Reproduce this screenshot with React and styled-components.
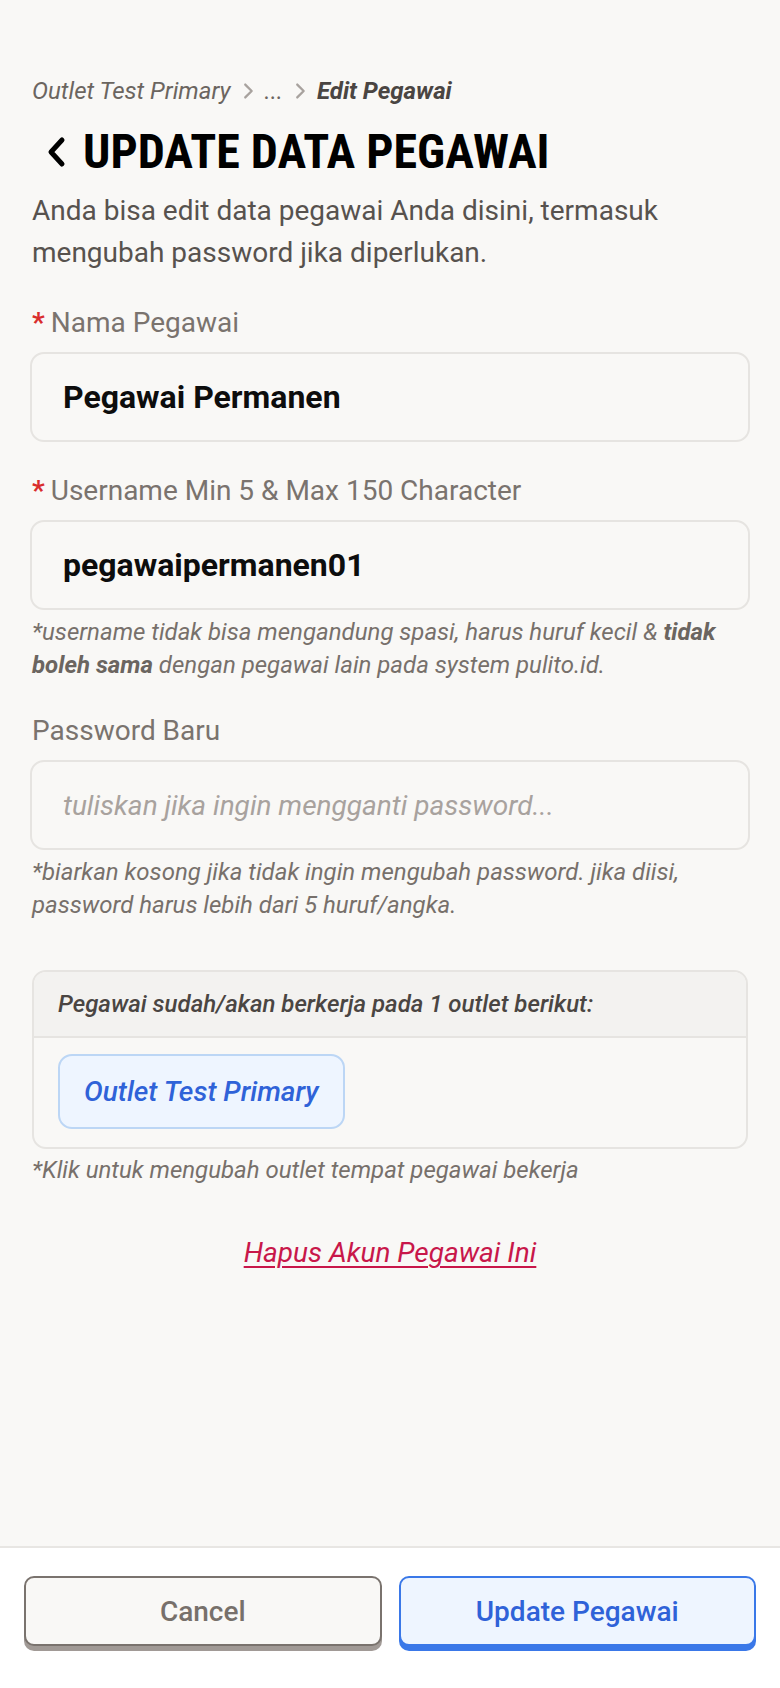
import styled, { createGlobalStyle } from "styled-components";

const GlobalStyle = createGlobalStyle`
  html, body {
    margin: 0;
    padding: 0;
    background: #f9f8f6;
  }
  body {
    font-family: Roboto, "Liberation Sans", sans-serif;
    color: #57524e;
  }
  * { box-sizing: border-box; }
`;

const Page = styled.div`
  min-height: 100vh;
  display: flex;
  flex-direction: column;
`;

const Main = styled.main`
  flex: 1;
  padding: 76px 32px 40px;
`;

const Breadcrumb = styled.nav`
  display: flex;
  align-items: center;
  gap: 6px;
  font-size: 24px;
  line-height: 30px;
  font-style: italic;
  color: #6b6560;

  b {
    font-weight: 700;
    color: #4a4542;
  }

  svg {
    color: #a8a29e;
  }
`;

const TitleRow = styled.h1`
  display: flex;
  align-items: center;
  gap: 16px;
  margin: 16px 0 0 13px;
  font-family: "Roboto Condensed", Roboto, sans-serif;
  font-stretch: condensed;
  font-weight: 700;
  font-size: 48px;
  line-height: 60px;
  color: #000;
  text-transform: uppercase;
`;

const Description = styled.p`
  margin: 8px 0 0;
  font-size: 28px;
  line-height: 42px;
  color: #57524e;
`;

const Field = styled.div`
  margin-top: 32px;
`;

const Label = styled.label`
  display: block;
  font-size: 28px;
  line-height: 34px;
  color: #7a736e;

  span {
    color: #d92d2d;
    font-weight: 700;
    margin-right: 6px;
  }
`;

const Input = styled.div`
  margin: 12px -2px 0;
  height: 90px;
  display: flex;
  align-items: center;
  padding: 0 31px;
  border: 2px solid #e6e4e1;
  border-radius: 14px;
  background: #f9f8f6;
  font-size: ${(p) => (p.$placeholder ? 28 : 32)}px;
  font-weight: ${(p) => (p.$placeholder ? 400 : 700)};
  font-style: ${(p) => (p.$placeholder ? "italic" : "normal")};
  color: ${(p) => (p.$placeholder ? "#a8a29e" : "#0d0d0d")};
`;

const Help = styled.p`
  margin: ${(p) => p.$top ?? 6}px 0 0;
  font-size: 24px;
  line-height: 33px;
  font-style: italic;
  color: #77706b;

  b {
    color: #6b6560;
    font-weight: 700;
  }
`;

const Card = styled.section`
  margin-top: 48px;
  border: 2px solid #e6e4e1;
  border-radius: 14px;
  overflow: hidden;
`;

const CardHeader = styled.div`
  height: 66px;
  display: flex;
  align-items: center;
  padding: 0 24px;
  background: #f3f2f0;
  border-bottom: 2px solid #e6e4e1;
  font-size: 24px;
  font-style: italic;
  font-weight: 500;
  color: #4a4542;
`;

const CardBody = styled.div`
  padding: 16px 24px 18px;
  display: flex;
  flex-wrap: wrap;
  gap: 12px;
`;

const Chip = styled.button`
  height: 75px;
  padding: 0 24px;
  border: 2px solid #bcd6f5;
  border-radius: 14px;
  background: #eef5ff;
  font-family: inherit;
  font-size: 28px;
  font-style: italic;
  font-weight: 500;
  color: #2f62d8;
`;

const DeleteLink = styled.a`
  display: block;
  margin-top: 48px;
  text-align: center;
  font-size: 28px;
  line-height: 36px;
  font-style: italic;
  color: #c8174a;
  text-decoration: underline;
  text-underline-offset: 4px;
  text-decoration-thickness: 2px;
`;

const Footer = styled.footer`
  display: grid;
  grid-template-columns: 1fr 1fr;
  gap: 17px;
  padding: 28px 24px 42px;
  background: #fff;
  border-top: 2px solid #e8e6e3;
`;

const Button = styled.button`
  height: 70px;
  border-radius: 10px;
  border: 2px solid ${(p) => (p.$primary ? "#3a78e8" : "#7a736e")};
  background: ${(p) => (p.$primary ? "#eef5ff" : "#f9f8f6")};
  box-shadow: 0 5px 0 ${(p) => (p.$primary ? "#3a78e8" : "#a19a96")};
  font-family: inherit;
  font-size: 28px;
  font-weight: 500;
  color: ${(p) => (p.$primary ? "#2f62d8" : "#77706b")};
`;

const Chevron = ({ size = 16, width = 2.5 }) => (
  <svg width={size} height={size} viewBox="0 0 24 24" fill="none" stroke="currentColor" strokeWidth={width} strokeLinecap="round" strokeLinejoin="round">
    <path d="M9 5l7 7-7 7" />
  </svg>
);

const BackIcon = () => (
  <svg width="22" height="32" viewBox="0 0 22 32" fill="none" stroke="#000" strokeWidth="5" strokeLinecap="round" strokeLinejoin="round">
    <path d="M17 4L6 16l11 12" />
  </svg>
);

export default function App() {
  return (
    <Page>
      <GlobalStyle />
      <Main>
        <Breadcrumb>
          <span>Outlet Test Primary</span>
          <Chevron size={22} />
          <span>...</span>
          <Chevron size={22} />
          <b>Edit Pegawai</b>
        </Breadcrumb>

        <TitleRow>
          <BackIcon />
          Update Data Pegawai
        </TitleRow>

        <Description>
          Anda bisa edit data pegawai Anda disini, termasuk mengubah password
          jika diperlukan.
        </Description>

        <Field>
          <Label>
            <span>*</span>Nama Pegawai
          </Label>
          <Input>Pegawai Permanen</Input>
        </Field>

        <Field>
          <Label>
            <span>*</span>Username Min 5 &amp; Max 150 Character
          </Label>
          <Input>pegawaipermanen01</Input>
          <Help>
            *username tidak bisa mengandung spasi, harus huruf kecil &amp;{" "}
            <b>tidak boleh sama</b> dengan pegawai lain pada system pulito.id.
          </Help>
        </Field>

        <Field>
          <Label>Password Baru</Label>
          <Input $placeholder>tuliskan jika ingin mengganti password...</Input>
          <Help>
            *biarkan kosong jika tidak ingin mengubah password. jika diisi,
            password harus lebih dari 5 huruf/angka.
          </Help>
        </Field>

        <Card>
          <CardHeader>Pegawai sudah/akan berkerja pada 1 outlet berikut:</CardHeader>
          <CardBody>
            <Chip>Outlet Test Primary</Chip>
          </CardBody>
        </Card>
        <Help $top={5}>*Klik untuk mengubah outlet tempat pegawai bekerja</Help>

        <DeleteLink href="#">Hapus Akun Pegawai Ini</DeleteLink>
      </Main>

      <Footer>
        <Button>Cancel</Button>
        <Button $primary>Update Pegawai</Button>
      </Footer>
    </Page>
  );
}
